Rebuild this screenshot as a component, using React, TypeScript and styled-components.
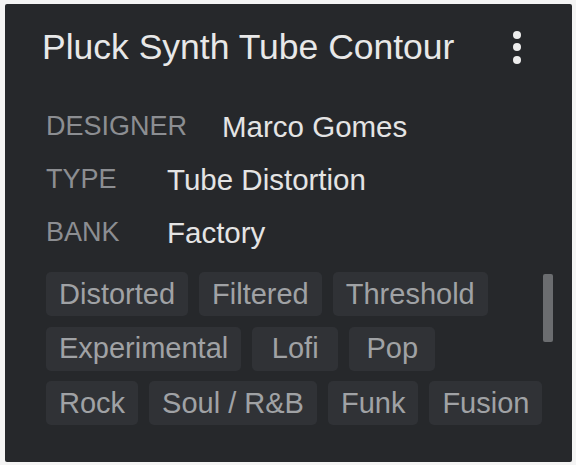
import React from "react";
import styled, { createGlobalStyle } from "styled-components";

const Global = createGlobalStyle`
  html, body { margin: 0; padding: 0; background: #f4f4f4; }
  body { font-family: "Liberation Sans", Arial, sans-serif; }
`;

const Panel = styled.section`
  box-sizing: border-box;
  margin: 4px 4px 0 5px;
  width: 567px;
  height: 458px;
  background: #26282b;
  border-radius: 2px;
  padding: 0 0 0 37px;
  display: flex;
  flex-direction: column;
`;

const Header = styled.header`
  height: 86px;
  display: flex;
  align-items: center;
  justify-content: space-between;
  padding-right: 51px;
`;

const Title = styled.h1`
  margin: 0;
  font-size: 35.5px;
  font-weight: 400;
  color: #e8e8e8;
`;

const MenuButton = styled.button`
  background: none;
  border: 0;
  padding: 0;
  display: flex;
  flex-direction: column;
  gap: 4.5px;
  cursor: pointer;
`;

const Dot = styled.span`
  width: 8px;
  height: 8px;
  border-radius: 50%;
  background: #ededed;
`;

const Meta = styled.dl`
  margin: 10px 0 0 4px;
  display: flex;
  flex-direction: column;
`;

const MetaRow = styled.div`
  height: 53px;
  display: flex;
  align-items: center;
  gap: 35px;
`;

const Label = styled.dt`
  min-width: 86px;
  font-size: 27px;
  color: #8c8e92;
  text-transform: uppercase;
`;

const Value = styled.dd`
  margin: 0;
  font-size: 29.5px;
  color: #e4e4e4;
`;

const Tags = styled.div`
  position: relative;
  margin: 13px 0 0 4px;
  display: flex;
  flex-direction: column;
  gap: 10.5px;
`;

const TagRow = styled.div`
  display: flex;
  gap: 11px;
`;

const Tag = styled.span`
  box-sizing: border-box;
  min-width: 86px;
  height: 44px;
  padding: 0 13px;
  display: inline-flex;
  align-items: center;
  justify-content: center;
  border-radius: 5px;
  background: #303236;
  color: #a0a2a5;
  font-size: 29px;
  white-space: nowrap;
`;

const ScrollThumb = styled.div`
  position: absolute;
  left: 497px;
  top: 2px;
  width: 10px;
  height: 68px;
  border-radius: 2px;
  background: #6b6d70;
`;

const meta = [
  ["Designer", "Marco Gomes"],
  ["Type", "Tube Distortion"],
  ["Bank", "Factory"],
];

const tagRows = [
  ["Distorted", "Filtered", "Threshold"],
  ["Experimental", "Lofi", "Pop"],
  ["Rock", "Soul / R&B", "Funk", "Fusion"],
];

export default function App() {
  return (
    <>
      <Global />
      <Panel>
        <Header>
          <Title>Pluck Synth Tube Contour</Title>
          <MenuButton aria-label="More">
            <Dot />
            <Dot />
            <Dot />
          </MenuButton>
        </Header>
        <Meta>
          {meta.map(([k, v]) => (
            <MetaRow key={k}>
              <Label>{k}</Label>
              <Value>{v}</Value>
            </MetaRow>
          ))}
        </Meta>
        <Tags>
          {tagRows.map((row, i) => (
            <TagRow key={i}>
              {row.map((t) => (
                <Tag key={t}>{t}</Tag>
              ))}
            </TagRow>
          ))}
          <ScrollThumb />
        </Tags>
      </Panel>
    </>
  );
}
